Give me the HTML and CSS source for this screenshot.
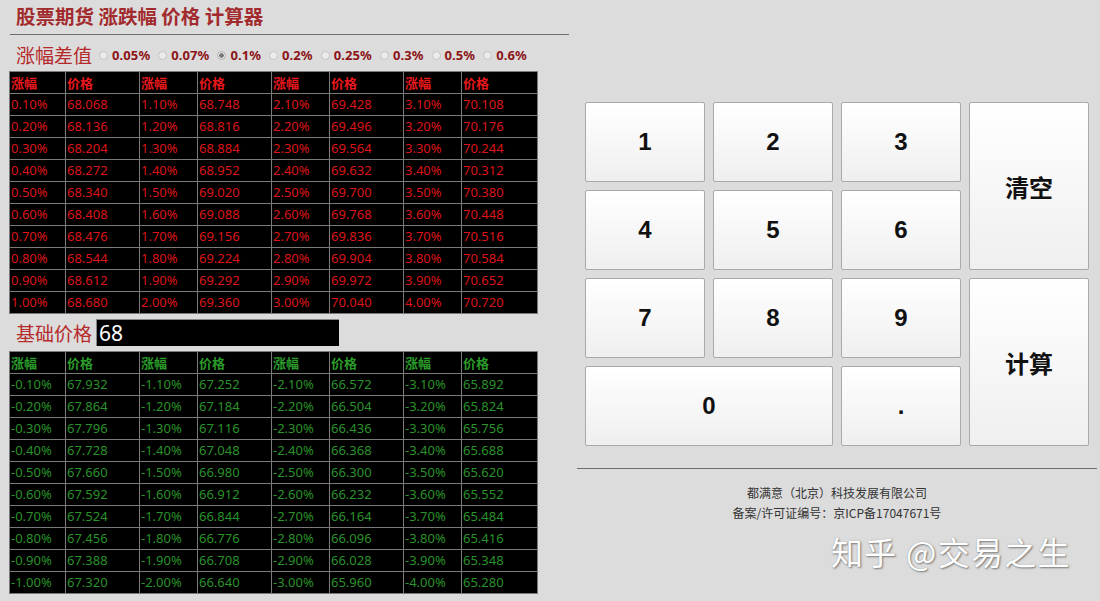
FILE: index.html
```html
<!DOCTYPE html>
<html lang="zh-CN">
<head>
<meta charset="utf-8">
<title>股票期货 涨跌幅 价格 计算器</title>
<link rel="stylesheet" href="styles.css">
</head>
<body>
<div class="page">
  <div class="left">
    <h1 class="title">股票期货 涨跌幅 价格 计算器</h1>
    <div class="steps">
      <span class="lbl">涨幅差值</span>
      <label class="opt"><input type="radio" name="s"><span>0.05%</span></label>
      <label class="opt"><input type="radio" name="s"><span>0.07%</span></label>
      <label class="opt"><input type="radio" name="s" checked><span>0.1%</span></label>
      <label class="opt"><input type="radio" name="s"><span>0.2%</span></label>
      <label class="opt"><input type="radio" name="s"><span>0.25%</span></label>
      <label class="opt"><input type="radio" name="s"><span>0.3%</span></label>
      <label class="opt"><input type="radio" name="s"><span>0.5%</span></label>
      <label class="opt"><input type="radio" name="s"><span>0.6%</span></label>
    </div>
    <table class="grid up">
      <colgroup><col class="c1"><col class="c2"><col class="c3"><col class="c2"><col class="c3"><col class="c2"><col class="c3"><col class="c4"></colgroup>
      <tr class="head"><td>涨幅</td><td>价格</td><td>涨幅</td><td>价格</td><td>涨幅</td><td>价格</td><td>涨幅</td><td>价格</td></tr>
      <tr><td>0.10%</td><td>68.068</td><td>1.10%</td><td>68.748</td><td>2.10%</td><td>69.428</td><td>3.10%</td><td>70.108</td></tr>
      <tr><td>0.20%</td><td>68.136</td><td>1.20%</td><td>68.816</td><td>2.20%</td><td>69.496</td><td>3.20%</td><td>70.176</td></tr>
      <tr><td>0.30%</td><td>68.204</td><td>1.30%</td><td>68.884</td><td>2.30%</td><td>69.564</td><td>3.30%</td><td>70.244</td></tr>
      <tr><td>0.40%</td><td>68.272</td><td>1.40%</td><td>68.952</td><td>2.40%</td><td>69.632</td><td>3.40%</td><td>70.312</td></tr>
      <tr><td>0.50%</td><td>68.340</td><td>1.50%</td><td>69.020</td><td>2.50%</td><td>69.700</td><td>3.50%</td><td>70.380</td></tr>
      <tr><td>0.60%</td><td>68.408</td><td>1.60%</td><td>69.088</td><td>2.60%</td><td>69.768</td><td>3.60%</td><td>70.448</td></tr>
      <tr><td>0.70%</td><td>68.476</td><td>1.70%</td><td>69.156</td><td>2.70%</td><td>69.836</td><td>3.70%</td><td>70.516</td></tr>
      <tr><td>0.80%</td><td>68.544</td><td>1.80%</td><td>69.224</td><td>2.80%</td><td>69.904</td><td>3.80%</td><td>70.584</td></tr>
      <tr><td>0.90%</td><td>68.612</td><td>1.90%</td><td>69.292</td><td>2.90%</td><td>69.972</td><td>3.90%</td><td>70.652</td></tr>
      <tr><td>1.00%</td><td>68.680</td><td>2.00%</td><td>69.360</td><td>3.00%</td><td>70.040</td><td>4.00%</td><td>70.720</td></tr>
    </table>
    <div class="base">
      <span class="lbl">基础价格</span>
      <input class="price" type="text" value="68">
    </div>
    <table class="grid down">
      <colgroup><col class="c1"><col class="c2"><col class="c3"><col class="c2"><col class="c3"><col class="c2"><col class="c3"><col class="c4"></colgroup>
      <tr class="head"><td>涨幅</td><td>价格</td><td>涨幅</td><td>价格</td><td>涨幅</td><td>价格</td><td>涨幅</td><td>价格</td></tr>
      <tr><td>-0.10%</td><td>67.932</td><td>-1.10%</td><td>67.252</td><td>-2.10%</td><td>66.572</td><td>-3.10%</td><td>65.892</td></tr>
      <tr><td>-0.20%</td><td>67.864</td><td>-1.20%</td><td>67.184</td><td>-2.20%</td><td>66.504</td><td>-3.20%</td><td>65.824</td></tr>
      <tr><td>-0.30%</td><td>67.796</td><td>-1.30%</td><td>67.116</td><td>-2.30%</td><td>66.436</td><td>-3.30%</td><td>65.756</td></tr>
      <tr><td>-0.40%</td><td>67.728</td><td>-1.40%</td><td>67.048</td><td>-2.40%</td><td>66.368</td><td>-3.40%</td><td>65.688</td></tr>
      <tr><td>-0.50%</td><td>67.660</td><td>-1.50%</td><td>66.980</td><td>-2.50%</td><td>66.300</td><td>-3.50%</td><td>65.620</td></tr>
      <tr><td>-0.60%</td><td>67.592</td><td>-1.60%</td><td>66.912</td><td>-2.60%</td><td>66.232</td><td>-3.60%</td><td>65.552</td></tr>
      <tr><td>-0.70%</td><td>67.524</td><td>-1.70%</td><td>66.844</td><td>-2.70%</td><td>66.164</td><td>-3.70%</td><td>65.484</td></tr>
      <tr><td>-0.80%</td><td>67.456</td><td>-1.80%</td><td>66.776</td><td>-2.80%</td><td>66.096</td><td>-3.80%</td><td>65.416</td></tr>
      <tr><td>-0.90%</td><td>67.388</td><td>-1.90%</td><td>66.708</td><td>-2.90%</td><td>66.028</td><td>-3.90%</td><td>65.348</td></tr>
      <tr><td>-1.00%</td><td>67.320</td><td>-2.00%</td><td>66.640</td><td>-3.00%</td><td>65.960</td><td>-4.00%</td><td>65.280</td></tr>
    </table>
  </div>
  <div class="right">
    <div class="keypad">
      <button class="key">1</button>
      <button class="key">2</button>
      <button class="key">3</button>
      <button class="key tall">清空</button>
      <button class="key">4</button>
      <button class="key">5</button>
      <button class="key">6</button>
      <button class="key">7</button>
      <button class="key">8</button>
      <button class="key">9</button>
      <button class="key tall">计算</button>
      <button class="key wide">0</button>
      <button class="key">.</button>
    </div>
    <div class="footer">
      <p>都满意（北京）科技发展有限公司</p>
      <p>备案/许可证编号：京ICP备17047671号</p>
    </div>
  </div>
</div>
<div class="watermark">知乎 @交易之生</div>
</body>
</html>
```

FILE: styles.css
```css
html, body {
  margin: 0;
  padding: 0;
  background: #dcdcdc;
  font-family: "Noto Sans", "Noto Sans CJK SC", sans-serif;
}
.page {
  display: flex;
  align-items: flex-start;
  width: 1100px;
  height: 601px;
  overflow: hidden;
}
.left {
  width: 560px;
  padding-left: 9px;
  flex: none;
}
.title {
  margin: 0 0 0 1px;
  padding: 2px 0 5px 6px;
  font-family: "Noto Sans CJK SC", sans-serif;
  font-size: 19.5px;
  line-height: 27px;
  font-weight: bold;
  color: #a22b2e;
  border-bottom: 1px solid #6e6e6e;
}
.steps {
  display: flex;
  align-items: center;
  height: 32px;
  padding-top: 4px;
  padding-left: 7px;
}
.lbl {
  font-family: "Noto Sans CJK SC", sans-serif;
  font-size: 19px;
  color: #b52a2a;
  line-height: 26px;
}
.steps .lbl {
  margin-right: 7px;
}
.opt {
  display: flex;
  align-items: center;
  margin-right: 8px;
}
.opt input {
  appearance: none;
  -webkit-appearance: none;
  width: 9px;
  height: 9px;
  margin: 1px 4px 0 0;
  border: 1px solid #c4c4c4;
  border-radius: 50%;
  background: #ececec;
  box-sizing: border-box;
}
.opt input:checked {
  background: radial-gradient(circle, #777 0 2px, #e6e6e6 2.5px);
  border-color: #b0b0b0;
}
.opt span {
  font-size: 13px;
  font-weight: bold;
  color: #8c1418;
  letter-spacing: 0.1px;
}
.grid {
  border-collapse: collapse;
  table-layout: fixed;
  width: 528px;
  background: #000;
  font-size: 13px;
}
.grid col.c1 { width: 56px; }
.grid col.c2 { width: 74px; }
.grid col.c3 { width: 58px; }
.grid col.c4 { width: 76px; }
.grid td {
  border: 1px solid #7a7a7a;
  height: 21px;
  padding: 0 0 0 1px;
  line-height: 21px;
  white-space: nowrap;
  overflow: hidden;
}
.grid .head td {
  font-family: "Noto Sans CJK SC", sans-serif;
  font-weight: bold;
  font-size: 13px;
}
.up td { color: #dc1418; }
.up .head td { color: #e8181c; }
.down td { color: #2a922a; }
.down .head td { color: #2a9c2a; }
.base {
  display: flex;
  align-items: center;
  height: 37px;
  padding-left: 7px;
}
.base .lbl {
  margin-right: 4px;
}
.price {
  width: 243px;
  height: 27px;
  box-sizing: border-box;
  border: none;
  border-top: 1px solid #888;
  border-left: 1px solid #888;
  background: #000;
  color: #fff;
  font-family: "Noto Sans", sans-serif;
  font-size: 21px;
  padding: 0 0 0 2px;
  line-height: 26px;
  outline: none;
}
.right {
  width: 520px;
  margin-left: 8px;
  flex: none;
}
.keypad {
  display: grid;
  grid-template-columns: repeat(4, 120px);
  grid-template-rows: repeat(4, 80px);
  gap: 8px;
  margin-top: 102px;
  padding: 0 0 22px 8px;
  border-bottom: 1px solid #6e6e6e;
}
.key {
  border: 1px solid #a9a9a9;
  border-radius: 2px;
  background: linear-gradient(#ffffff, #efefef);
  font-family: "Liberation Sans", "Noto Sans CJK SC", sans-serif;
  font-weight: bold;
  font-size: 24px;
  color: #111;
  padding: 0;
}
.key.tall {
  grid-row: span 2;
}
.key.wide {
  grid-column: span 2;
}
.footer {
  padding-top: 14px;
  text-align: center;
  font-family: "Noto Sans CJK SC", sans-serif;
  font-size: 12px;
  color: #333;
}
.footer p {
  margin: 0;
  line-height: 20px;
}
.watermark {
  position: absolute;
  left: 831px;
  top: 528px;
  font-family: "Noto Sans CJK SC", sans-serif;
  font-size: 32px;
  color: #fff;
  text-shadow: 1px 1px 2px #777, 0 0 1px #999;
  letter-spacing: 1.3px;
  white-space: nowrap;
}
```
